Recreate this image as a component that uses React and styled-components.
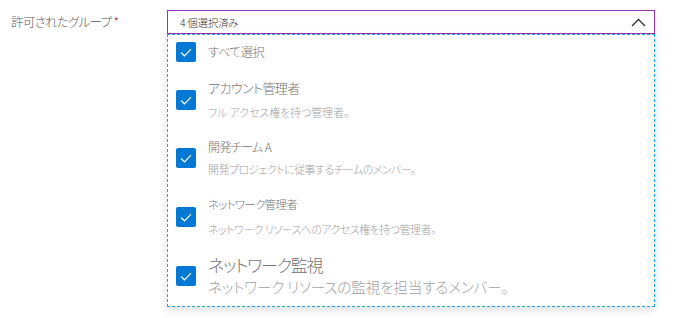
import React from "react";
import styled, { createGlobalStyle } from "styled-components";

const GlobalStyle = createGlobalStyle`
  html, body {
    margin: 0;
    padding: 0;
    background: #ffffff;
  }
  body {
    font-family: "Noto Sans CJK JP", "Noto Sans", sans-serif;
    font-feature-settings: "palt";
    font-weight: 300;
  }
`;

const Page = styled.div`
  display: flex;
  align-items: flex-start;
  padding: 10px 0 0 11px;
  width: 675px;
  height: 318px;
  box-sizing: border-box;
`;

const Label = styled.label`
  width: 156px;
  flex-shrink: 0;
  height: 24px;
  line-height: 24px;
  font-size: 12.5px;
  letter-spacing: -0.7px;
  color: #5a5a5a;
  white-space: nowrap;
`;

const Required = styled.span`
  color: #a4262c;
  margin-left: 2px;
`;

const Field = styled.div`
  width: 488px;
  display: flex;
  flex-direction: column;
`;

const Select = styled.div`
  height: 24px;
  box-sizing: border-box;
  border: 1px solid #9932b5;
  display: flex;
  align-items: center;
  justify-content: space-between;
  padding: 0 8px 0 12px;
  color: #323130;
`;

const SelectText = styled.span`
  font-size: 10.5px;
  letter-spacing: -0.3px;
  white-space: pre;
`;

const Chevron = () => (
  <svg width="15" height="9" viewBox="0 0 15 9">
    <polyline
      points="1,8 7.5,1.5 14,8"
      fill="none"
      stroke="#323130"
      strokeWidth="1.3"
    />
  </svg>
);

const Panel = styled.div`
  border: 1px dashed #1aa6e6;
  background: #fff;
  box-shadow: 0 3px 8px rgba(0, 0, 0, 0.13);
  display: flex;
  flex-direction: column;
  gap: 15px;
  padding: 6px 0 8px 8px;
  height: 273px;
  box-sizing: border-box;
`;

const Option = styled.div`
  display: flex;
  align-items: center;
  gap: 12px;
`;

const Box = styled.span`
  width: 20px;
  height: 20px;
  flex-shrink: 0;
  border-radius: 2px;
  background: #0078d4;
  display: flex;
  align-items: center;
  justify-content: center;
`;

const Check = () => (
  <svg width="20" height="20" viewBox="0 0 20 20">
    <polyline
      points="5,10.5 8.5,13.8 15,7.2"
      fill="none"
      stroke="#ffffff"
      strokeWidth="1.2"
    />
  </svg>
);

const Texts = styled.div`
  display: flex;
  flex-direction: column;
  white-space: pre;
`;

const Title = styled.div`
  font-size: ${(p) => p.$size}px;
  line-height: ${(p) => p.$lh}px;
  letter-spacing: ${(p) => p.$ls || 0}px;
  color: #767676;
`;

const Desc = styled.div`
  font-size: ${(p) => p.$size}px;
  line-height: ${(p) => p.$lh}px;
  margin-top: ${(p) => p.$gap}px;
  letter-spacing: ${(p) => p.$ls || 0}px;
  color: #a2a2a2;
`;

const options = [
  {
    title: "アカウント管理者",
    desc: "フル アクセス権を持つ管理者。",
    t: 13, tls: -0.6, tl: 20, d: 11, dls: -0.1, dl: 20, g: 4,
  },
  {
    title: "開発チーム A",
    desc: "開発プロジェクトに従事するチームのメンバー。",
    t: 12, tls: -0.6, tl: 20, d: 11, dls: -0.6, dl: 20, g: 2,
  },
  {
    title: "ネットワーク管理者",
    desc: "ネットワーク リソースへのアクセス権を持つ管理者。",
    t: 11.5, tls: -0.7, tl: 20, d: 11, dls: -0.55, dl: 20, g: 5,
  },
  {
    title: "ネットワーク監視",
    desc: "ネットワーク リソースの監視を担当するメンバー。",
    t: 17, tls: -1.2, tl: 22, d: 14.7, dls: -0.25, dl: 22, g: 0,
  },
];

export default function App() {
  return (
    <>
      <GlobalStyle />
      <Page>
        <Label>
          許可されたグループ<Required>*</Required>
        </Label>
        <Field>
          <Select>
            <SelectText>4 個選択済み</SelectText>
            <Chevron />
          </Select>
          <Panel>
            <Option>
              <Box>
                <Check />
              </Box>
              <Title $size={12.5} $lh={22} $ls={-0.6}>すべて選択</Title>
            </Option>
            {options.map((o) => (
              <Option key={o.title}>
                <Box>
                  <Check />
                </Box>
                <Texts>
                  <Title $size={o.t} $lh={o.tl} $ls={o.tls}>{o.title}</Title>
                  <Desc $size={o.d} $lh={o.dl} $gap={o.g} $ls={o.dls}>{o.desc}</Desc>
                </Texts>
              </Option>
            ))}
          </Panel>
        </Field>
      </Page>
    </>
  );
}
